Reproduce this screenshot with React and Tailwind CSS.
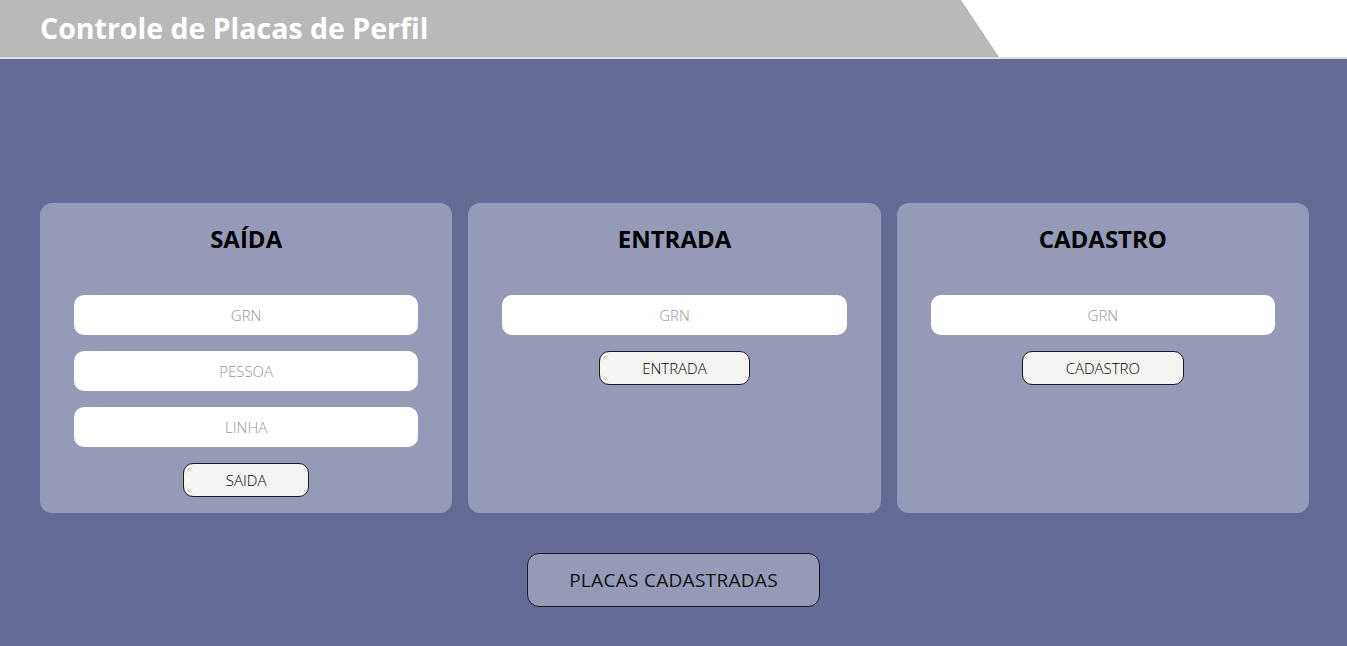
export default function App() {
  const font = { fontFamily: '"Open Sans", "Liberation Sans", sans-serif' }
  return (
    <div className="min-h-[646px] bg-[#656b96] flex flex-col" style={font}>
      <header className="relative h-[57px] bg-white border-b-2 border-[#dedee3] box-content">
        <div
          className="absolute inset-y-0 left-0 w-[999px] bg-[#b9b9b9]"
          style={{ clipPath: 'polygon(0 0, 961px 0, 999px 100%, 0 100%)' }}
        />
        <h1 className="relative pl-[40px] pt-[9px] text-[28.5px] leading-[38px] font-bold text-white">
          Controle de Placas de Perfil
        </h1>
      </header>

      <main className="flex flex-col items-center pt-[144px]">
        <div className="grid grid-cols-3 gap-[16px] w-full pl-[40px] pr-[38px]">
          <Card title="SAÍDA" fields={['GRN', 'PESSOA', 'LINHA']} button="SAIDA" buttonWidth="w-[126px]" />
          <Card title="ENTRADA" fields={['GRN']} button="ENTRADA" buttonWidth="w-[151px]" />
          <Card title="CADASTRO" fields={['GRN']} button="CADASTRO" buttonWidth="w-[162px]" />
        </div>

        <button className="mt-[40px] w-[293px] h-[54px] rounded-[12px] border border-[#1a1a1a] bg-[#959ab6] text-[19px] text-[#111] tracking-[0.3px]">
          PLACAS CADASTRADAS
        </button>
      </main>
    </div>
  )
}

function Card({ title, fields, button, buttonWidth }) {
  return (
    <div className="h-[310px] rounded-[12px] bg-[#959ab6] flex flex-col items-center pt-[21px]">
      <h2 className="text-[24px] leading-[30px] font-bold text-black">{title}</h2>
      <div className="mt-[41px] w-full px-[34px] flex flex-col gap-[16px]">
        {fields.map(f => (
          <input
            key={f}
            placeholder={f}
            className="h-[40px] w-full rounded-[10px] bg-white text-center text-[15px] font-light text-[#333] placeholder:text-[#959595] outline-none"
          />
        ))}
      </div>
      <button className={`mt-[16px] h-[34px] ${buttonWidth} rounded-[10px] border border-[#1a1a1a] bg-[#f3f3f1] text-[15px] font-light text-black`}>
        {button}
      </button>
    </div>
  )
}
